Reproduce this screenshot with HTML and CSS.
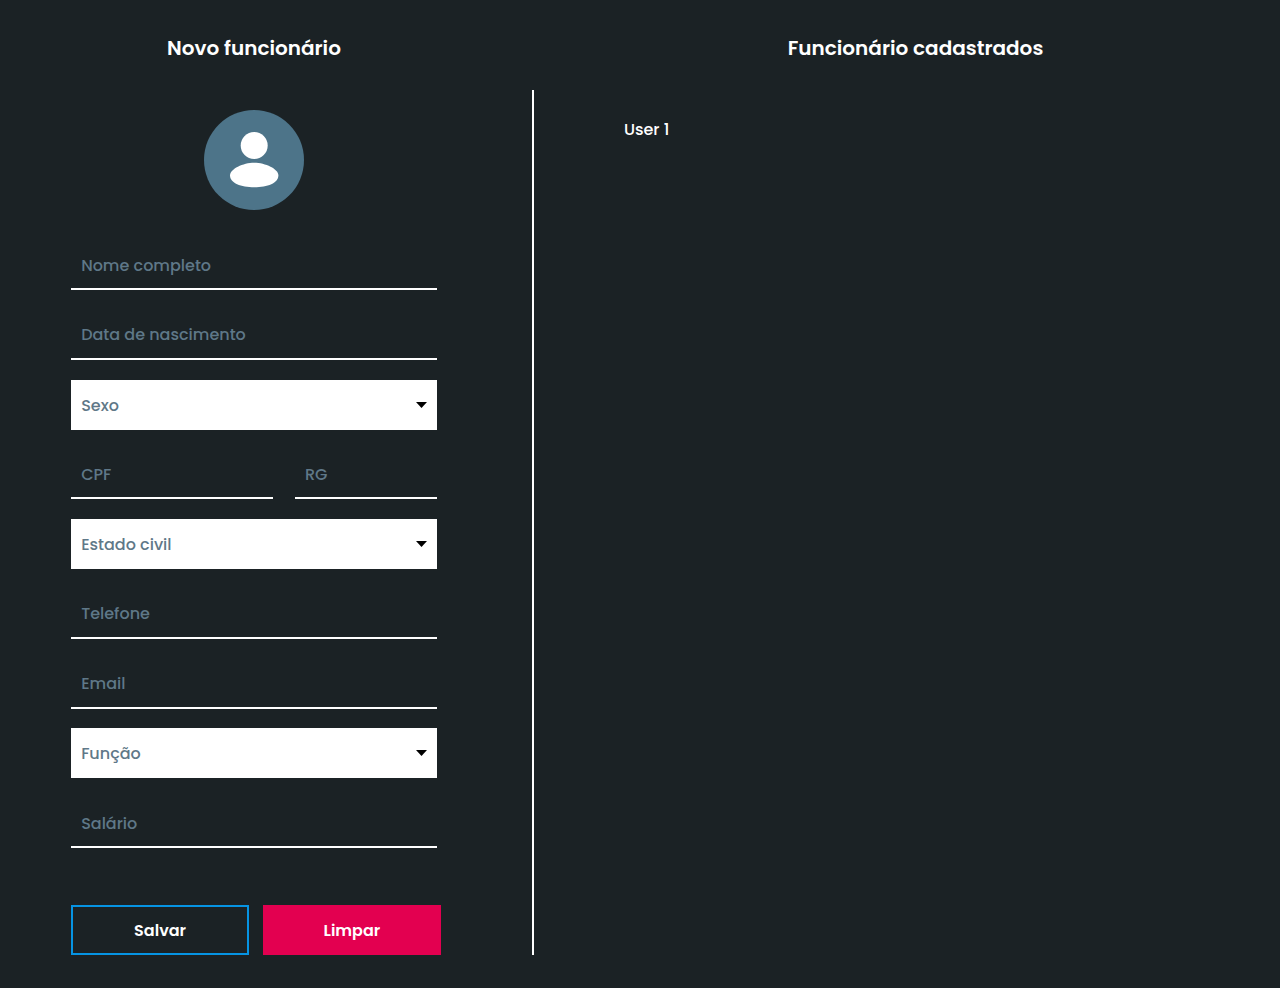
FILE: index.html
```html
<!DOCTYPE html>
<html lang="pt-BR">
<head>
<meta charset="utf-8">
<meta name="viewport" content="width=device-width, initial-scale=1">
<title>Funcionários</title>
<link rel="stylesheet" href="styles.css">
</head>
<body>
<main class="page">
  <section class="register">
    <h1 class="title">Novo funcionário</h1>
    <svg class="avatar" viewBox="0 0 100 100" aria-hidden="true">
      <circle cx="50" cy="50" r="50" fill="#4d7489"/>
      <circle cx="50.2" cy="35.5" r="13.5" fill="#fff"/>
      <path d="M26 65.5C26 59 39 52.800 50.200 52.800S74.400 59 74.400 65.500C74.400 73 63.500 77.300 50.200 77.300S26 73 26 65.500Z" fill="#fff"/>
    </svg>
    <form class="form">
      <div class="fields">
        <input class="field" type="text" placeholder="Nome completo" aria-label="Nome completo">
        <input class="field" type="text" placeholder="Data de nascimento" aria-label="Data de nascimento">
        <div class="picker">
          <select class="select" aria-label="Sexo"><option>Sexo</option><option>Feminino</option><option>Masculino</option></select>
          <svg class="arrow" viewBox="0 0 11 6" aria-hidden="true"><path d="M0 0H11L5.500 6Z"/></svg>
        </div>
        <div class="documents">
          <input class="field" type="text" placeholder="CPF" aria-label="CPF">
          <input class="field" type="text" placeholder="RG" aria-label="RG">
        </div>
        <div class="picker">
          <select class="select" aria-label="Estado civil"><option>Estado civil</option><option>Solteiro</option><option>Casado</option></select>
          <svg class="arrow" viewBox="0 0 11 6" aria-hidden="true"><path d="M0 0H11L5.500 6Z"/></svg>
        </div>
        <input class="field" type="tel" placeholder="Telefone" aria-label="Telefone">
        <input class="field" type="email" placeholder="Email" aria-label="Email">
        <div class="picker">
          <select class="select" aria-label="Função"><option>Função</option></select>
          <svg class="arrow" viewBox="0 0 11 6" aria-hidden="true"><path d="M0 0H11L5.500 6Z"/></svg>
        </div>
        <input class="field" type="text" placeholder="Salário" aria-label="Salário">
      </div>
      <div class="actions">
        <button class="button save" type="submit">Salvar</button>
        <button class="button clear" type="reset">Limpar</button>
      </div>
    </form>
  </section>
  <div class="divider"></div>
  <section class="employees">
    <h2 class="title">Funcionário cadastrados</h2>
    <ul class="list">
      <li>User 1</li>
    </ul>
  </section>
</main>
</body>
</html>
```

FILE: styles.css
```css
* {
  box-sizing: border-box;
}

body {
  margin: 0;
  background: #1b2225;
  color: #fff;
  font-family: Poppins, Inter, sans-serif;
  font-size: 16px;
  font-weight: 500;
  line-height: 24px;
}

.page {
  display: grid;
  grid-template-columns: minmax(0, 508fr) 43px minmax(0, 729fr);
  min-height: 100vh;
  padding: 33px 0;
}

.title {
  margin: 0;
  font-size: 20px;
  line-height: 30px;
  font-weight: 600;
  text-align: center;
}

.register {
  display: flex;
  flex-direction: column;
  align-items: center;
}

.avatar {
  flex: none;
  width: 100px;
  height: 100px;
  margin: 47px 0 30px;
}

.form {
  display: flex;
  flex: 1;
  flex-direction: column;
  gap: 57px;
  width: 72%;
}

.fields {
  display: flex;
  flex: 1;
  flex-direction: column;
  justify-content: space-between;
}

.field,
.select {
  width: 100%;
  min-width: 0;
  height: 50px;
  margin: 0;
  padding: 2px 10px 0;
  border: 0;
  border-radius: 0;
  font: inherit;
  outline-offset: 2px;
}

.field {
  border-bottom: 2px solid #fff;
  background: transparent;
  color: #fff;
}

.field::placeholder {
  color: #5f7888;
  opacity: 1;
}

.picker {
  position: relative;
}

.select {
  display: block;
  appearance: none;
  background: #fff;
  color: #5f7888;
}

.arrow {
  position: absolute;
  top: 22px;
  right: 10px;
  width: 11px;
  height: 6px;
  pointer-events: none;
}

.documents {
  display: grid;
  grid-template-columns: 202fr 142fr;
  gap: 22px;
}

.actions {
  display: grid;
  grid-template-columns: 1fr 1fr;
  gap: 14px;
  margin-right: -4px;
}

.button {
  height: 50px;
  padding: 2px 10px 0;
  border: 2px solid;
  color: #fff;
  font: inherit;
  font-weight: 600;
  cursor: pointer;
}

.save {
  border-color: #0694e3;
  background: transparent;
}

.clear {
  border-color: #e30050;
  background: #e30050;
}

.divider {
  width: 2px;
  margin: 57px 0 0 24px;
  background: #fff;
}

.list {
  margin: 55px 0 0;
  padding: 0 10%;
  list-style: none;
}
```
